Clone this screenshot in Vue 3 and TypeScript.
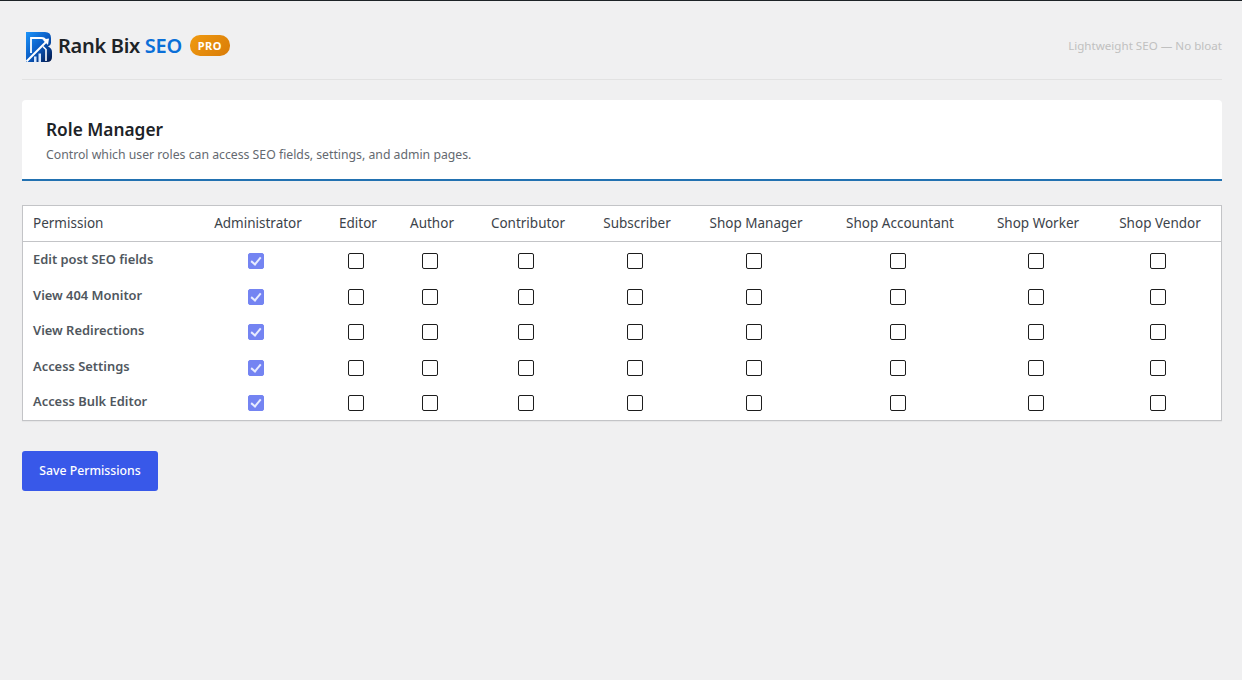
<template>
  <div class="page">
    <header class="brand-bar">
      <div class="brand">
        <svg class="logo" viewBox="0 0 26 30" width="26" height="30">
          <defs>
            <linearGradient id="logoFill" x1="0" y1="0" x2="1" y2="1">
              <stop offset="0" stop-color="#1c94fa" />
              <stop offset="0.5" stop-color="#0a5cc4" />
              <stop offset="1" stop-color="#031544" />
            </linearGradient>
          </defs>
          <path d="M0 0H19Q25 0 25 6V11Q25 13 22 14.500Q26 16 26 20V25Q26 30 21 30H0Z" fill="url(#logoFill)" />
          <path d="M5 21V6H15Q19.500 6 19.500 9.500" fill="none" stroke="#fff" stroke-width="1.800" />
          <path d="M0.500 29.500L21 9" stroke="#fff" stroke-width="2" />
          <path d="M16.500 7.500L23 6.500L22 13Z" fill="#fff" />
          <path d="M8 30V24.500H10.500V30ZM12.500 30V21.500H15V30Z" fill="#d5e7ff" />
          <path d="M17 14.500L20 17.500V29" fill="none" stroke="#fff" stroke-width="1.600" />
        </svg>
        <span class="brand-name">Rank Bix <em>SEO</em></span>
        <span class="pro-badge">PRO</span>
      </div>
      <span class="tagline">Lightweight SEO — No bloat</span>
    </header>

    <section class="title-card">
      <h1>Role Manager</h1>
      <p>Control which user roles can access SEO fields, settings, and admin pages.</p>
    </section>

    <div class="table-wrap">
      <table class="role-table">
        <colgroup>
          <col v-for="w in colWidths" :key="w.name" :style="{ width: w.width + 'px' }" />
        </colgroup>
        <thead>
          <tr>
            <th>Permission</th>
            <th v-for="role in roles" :key="role" class="role-col">{{ role }}</th>
          </tr>
        </thead>
        <tbody>
          <tr v-for="(perm, i) in permissions" :key="perm" :class="{ tall: i % 2 === 0 }">
            <td class="perm-name">{{ perm }}</td>
            <td v-for="role in roles" :key="role" class="role-col">
              <input
                type="checkbox"
                class="perm-check"
                :checked="role === 'Administrator'"
                :disabled="role === 'Administrator'"
              />
            </td>
          </tr>
        </tbody>
      </table>
    </div>

    <button class="save-btn">Save Permissions</button>
  </div>
</template>

<script setup lang="ts">
const roles = [
  'Administrator',
  'Editor',
  'Author',
  'Contributor',
  'Subscriber',
  'Shop Manager',
  'Shop Accountant',
  'Shop Worker',
  'Shop Vendor',
]

const permissions = [
  'Edit post SEO fields',
  'View 404 Monitor',
  'View Redirections',
  'Access Settings',
  'Access Bulk Editor',
]

const colWidths = [170, 130, 70, 78, 114, 104, 134, 154, 122, 122].map((width, i) => ({
  name: 'col' + i,
  width,
}))
</script>

<style>
html, body { background: #f0f0f1; }
</style>

<style scoped>
.page {
  min-height: 679px;
  border-top: 1px solid #1d2327;
  padding: 0 20px 0 22px;
  font-family: "Noto Sans", "Open Sans", sans-serif;
  color: #3c434a;
}
.brand-bar {
  display: flex;
  justify-content: space-between;
  align-items: center;
  box-sizing: border-box;
  height: 79px;
  padding-top: 10px;
  border-bottom: 1px solid #e2e2e2;
}
.brand { display: flex; align-items: center; padding-left: 4px; }
.logo { margin-right: 6px; margin-top: 3px; }
.brand-name { font-size: 20px; font-weight: 600; color: #1d2327; letter-spacing: -0.3px; }
.brand-name em { font-style: normal; color: #0a6fd8; }
.pro-badge {
  margin: 1px 0 0 8px;
  width: 40px;
  height: 21px;
  line-height: 21px;
  text-align: center;
  border-radius: 10px;
  background: linear-gradient(135deg, #f09a10, #d97c08);
  color: #fff;
  font-size: 11px;
  font-weight: 700;
  letter-spacing: 0.5px;
}
.tagline { font-size: 11.600px; color: #c0c0c0; }
.title-card {
  margin-top: 20px;
  height: 79px;
  background: #fff;
  border-radius: 4px 4px 0 0;
  border-bottom: 2px solid #2271b1;
  padding: 0 24px;
  overflow: hidden;
}
.title-card h1 {
  margin: 18px 0 0;
  font-size: 17.300px;
  line-height: 24px;
  font-weight: 600;
  color: #1d2327;
}
.title-card p {
  margin: 4px 0 0;
  font-size: 12.250px;
  line-height: 18px;
  color: #646970;
}
.table-wrap { margin-top: 24px; }
.role-table {
  width: 1200px;
  table-layout: fixed;
  border-collapse: separate;
  border-spacing: 0;
  background: #fff;
  border: 1px solid #c3c4c7;
  box-shadow: 0 1px 1px rgba(0, 0, 0, 0.04);
}
.role-table th {
  height: 36px;
  padding: 0 10px 2px;
  box-sizing: border-box;
  border-bottom: 1px solid #c3c4c7;
  font-size: 13.500px;
  font-weight: 400;
  text-align: left;
  color: #3c434a;
  white-space: nowrap;
}
.role-table th.role-col { text-align: center; }
.role-table td {
  box-sizing: border-box;
  height: 35px;
  padding: 0 10px;
  text-align: left;
}
.role-table tr.tall td { height: 36px; }
.role-table td.role-col { text-align: center; }
.perm-name {
  font-size: 12.900px;
  font-weight: 600;
  color: #50575e;
  padding-bottom: 1px !important;
  white-space: nowrap;
}
.role-table tr.tall .perm-name { padding-bottom: 3px !important; }
.perm-check {
  appearance: none;
  display: inline-block;
  position: relative;
  box-sizing: border-box;
  width: 16px;
  height: 16px;
  margin: 0 4px 0 0;
  vertical-align: middle;
  border: 1px solid #1d1d1d;
  border-radius: 2px;
  background: #fff;
}
.tall .perm-check { margin-bottom: 2px; }
.perm-check:checked {
  border-color: #7484f2;
  background: #7484f2;
}
.perm-check:checked::after {
  content: "";
  position: absolute;
  left: 4px;
  top: 1px;
  width: 4px;
  height: 8px;
  border: solid #e8ecff;
  border-width: 0 2px 2px 0;
  transform: rotate(40deg);
}
.save-btn {
  display: block;
  margin-top: 30px;
  width: 136px;
  height: 40px;
  padding: 0 0 2px;
  border: none;
  border-radius: 3px;
  background: #3858e9;
  color: #fff;
  font-family: inherit;
  font-size: 12.250px;
  font-weight: 500;
}
</style>
